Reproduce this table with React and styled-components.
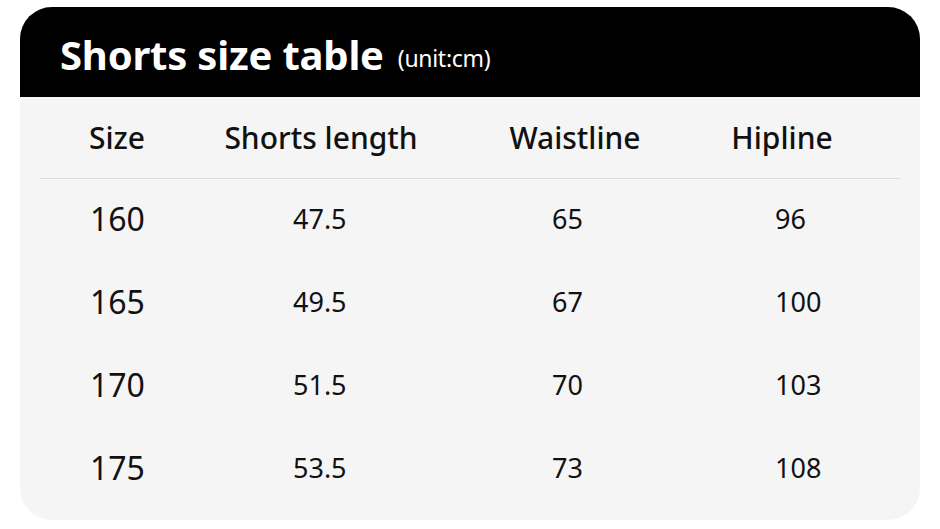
import React from "react";
import styled, { createGlobalStyle } from "styled-components";

const GlobalStyle = createGlobalStyle`
  html, body {
    margin: 0;
    padding: 0;
    background: #ffffff;
  }
  body {
    font-family: "Noto Sans", "Open Sans", sans-serif;
  }
`;

const Page = styled.div`
  width: 940px;
  height: 529px;
  padding: 7px 20px 9px;
  box-sizing: border-box;
`;

const Card = styled.section`
  height: 100%;
  background: #f5f5f5;
  border-radius: 32px;
  overflow: hidden;
  display: flex;
  flex-direction: column;
`;

const Header = styled.header`
  height: 90px;
  background: #000;
  display: flex;
  align-items: center;
  padding: 4px 0 0 40px;
  box-sizing: border-box;
  color: #fff;
`;

const Title = styled.h1`
  margin: 0;
  font-size: 40px;
  font-weight: 700;
  letter-spacing: -0.2px;
`;

const Unit = styled.span`
  margin-left: 14px;
  margin-top: 8px;
  font-size: 23px;
  font-weight: 400;
  letter-spacing: -0.3px;
`;

const Table = styled.div`
  padding: 0 20px;
`;

const Row = styled.div`
  display: grid;
  grid-template-columns: 154px 254px 254px 160px;
  align-items: center;
  height: ${(p) => (p.$head ? "82px" : "83px")};
  border-bottom: ${(p) => (p.$head ? "1px solid #dcdcdc" : "none")};
  box-sizing: border-box;
`;

const HeadCell = styled.div`
  text-align: center;
  font-size: 30px;
  font-weight: 500;
  color: #111;
`;

const Cell = styled.div`
  text-align: left;
  padding-left: ${(p) => p.$indent}px;
  font-size: ${(p) => (p.$big ? "32px" : "27px")};
  font-weight: 400;
  color: #111;
  margin-top: -5px;
  white-space: nowrap;
`;

const heads = ["Size", "Shorts length", "Waistline", "Hipline"];

const rows = [
  ["160", "47.5", "65", "96"],
  ["165", "49.5", "67", "100"],
  ["170", "51.5", "70", "103"],
  ["175", "53.5", "73", "108"],
];

const indents = [50, 99, 104, 73];

const App = () => (
  <Page>
    <GlobalStyle />
    <Card>
      <Header>
        <Title>Shorts size table</Title>
        <Unit>(unit:cm)</Unit>
      </Header>
      <Table>
        <Row $head>
          {heads.map((h) => (
            <HeadCell key={h}>{h}</HeadCell>
          ))}
        </Row>
        {rows.map((r) => (
          <Row key={r[0]}>
            {r.map((v, i) => (
              <Cell key={i} $big={i === 0} $indent={indents[i]}>
                {v}
              </Cell>
            ))}
          </Row>
        ))}
      </Table>
    </Card>
  </Page>
);

export default App;
